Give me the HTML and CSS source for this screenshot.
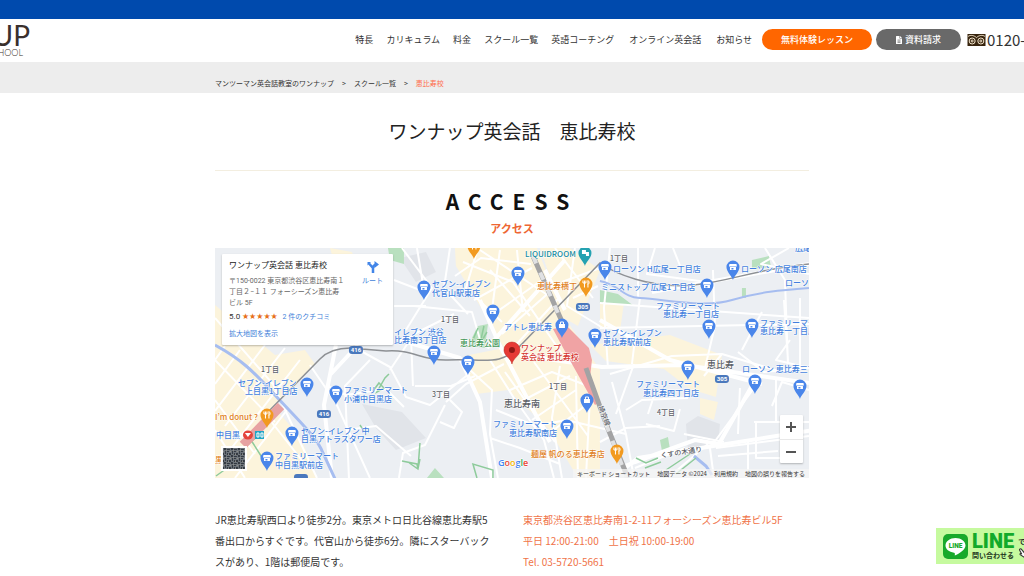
FILE: index.html
```html
<!DOCTYPE html>
<html lang="ja">
<head>
<meta charset="utf-8">
<meta name="viewport" content="width=device-width, initial-scale=1">
<title>ワンナップ英会話 恵比寿校</title>
<link rel="stylesheet" href="styles.css">
</head>
<body>
<div class="topbar"></div>
<header class="header">
  <a class="logo" href="#" aria-label="ワンナップ英会話">
    <span class="logo-main">UP</span>
    <span class="logo-sub">HOOL</span>
  </a>
  <nav class="nav">
    <a href="#">特長</a>
    <a href="#">カリキュラム</a>
    <a href="#">料金</a>
    <a href="#">スクール一覧</a>
    <a href="#">英語コーチング</a>
    <a class="nav-wide" href="#">オンライン英会話</a>
    <a class="nav-wide" href="#">お知らせ</a>
  </nav>
  <div class="actions">
    <a class="pill pill-trial" href="#">無料体験レッスン</a>
    <a class="pill pill-docs" href="#">
      <svg class="doc-icon" viewBox="0 0 12 16" aria-hidden="true"><path fill="#fff" d="M1 0h6v5h5v10a1 1 0 0 1-1 1H1a1 1 0 0 1-1-1V1a1 1 0 0 1 1-1zM8 0l4 4H8z"/><path stroke="#696969" stroke-width="1.3" d="M3 8h6M3 10.500h6M3 13h6"/></svg>
      資料請求
    </a>
  </div>
  <a class="phone" href="tel:0120">
    <svg class="freedial" viewBox="0 0 54 36" aria-hidden="true"><rect width="54" height="36" fill="#38250f"/><g fill="none" stroke="#f6e8cf" stroke-width="3"><path d="M2 7c8-5 18-3 25 4 7-7 17-9 25-4"/><circle cx="14" cy="21" r="9"/><circle cx="40" cy="21" r="9"/><circle cx="14" cy="21" r="3"/><circle cx="40" cy="21" r="3"/></g></svg>
    <span>0120-</span>
  </a>
</header>

<div class="crumb-bar">
  <nav class="container crumbs" aria-label="パンくず">
    <a href="#">マンツーマン英会話教室のワンナップ</a><span>&gt;</span><a href="#">スクール一覧</a><span>&gt;</span><a class="current" href="#">恵比寿校</a>
  </nav>
</div>

<main class="container">
  <h1 class="title">ワンナップ英会話　恵比寿校</h1>
  <section class="access">
    <h2 class="access-en">ACCESS</h2>
    <p class="access-ja">アクセス</p>

    <div class="map">
      <svg class="map-canvas" viewBox="215 248 594 230" preserveAspectRatio="xMidYMid slice" role="img" aria-label="恵比寿校周辺の地図">
        <defs>
          <g id="pin"><path d="M0 13C-1 9-6.500 5-6.500 0a6.500 6.500 0 0 1 13 0C6.500 5 1 9 0 13z"/></g>
          <g id="shop"><use href="#pin" fill="#4a86ea"/><path fill="#fff" d="M-3.500-3h7l.5 2.500h-8zM-3 0h6v3h-6z"/><path fill="#4a86ea" d="M-1.500 1h2v1.500h-2z"/></g>
          <g id="food"><use href="#pin" fill="#f29a1f"/><path fill="none" stroke="#fff" stroke-width="1" d="M-1.500-3.500v7M-3-3.500v2.500h3v-2.500M2 3.500v-7c1.500 1 1.500 3 0 4"/></g>
          <g id="bag"><use href="#pin" fill="#4a86ea"/><path fill="#fff" d="M-3-1h6v4h-6z"/><path fill="none" stroke="#fff" d="M-1.500-1v-2h3v2"/></g>
          <g id="shield"><rect x="-7" y="-4" width="14" height="8" rx="3" fill="#4a78bd"/></g>
          <pattern id="qr" width="7" height="7" patternUnits="userSpaceOnUse"><rect width="7" height="7" fill="#6d747b"/><path fill="#343a41" d="M0 0h2v2h-2zM3 1h3v1h-3zM1 3h1v3h-1zM3 3h2v1h-2zM5 5h2v2h-2zM3 5h1v2h-1z"/><path fill="#8f8e86" d="M2 2h1v1h-1zM6 3h1v1h-1zM4 6h1v1h-1z"/></pattern>
        </defs>
        <rect x="215" y="248" width="594" height="230" fill="#eceff3"/>
        <g fill="#fcf4dc">
          <path d="M455 248h82l28 70 35 52v108h-22l-30-50-40-38-32 4-12-38 40-8-18-32-30-50z"/>
          <path d="M215 305l60 50 30-5 10 14-42 42 28 32 16 40H215z"/>
          <path d="M540 248h30l30 22-22 56-14-8zM600 297l24 6-4 28-20-4zM590 345l80-10 52 20-6 42-26-8-26-20-58-8zM700 398l18 4-4 18-14-6z"/>
          <path d="M330 248l22 4 10 26-20 10z"/>
        </g>
        <path fill="#e1e4e9" d="M362 404l40 8 24 26-30 12-20-22zM686 424l12-8 22 8-2 22-30 4zM400 258l26-6 10 20-20 10z"/>
        <g fill="#b9e0bf">
          <path d="M388 248h16v16l-14-4zM472 338l6-12 10-2-3 24-14-2zM600 290l18 4 16 12-34-3zM752 260l17-4 2 11-19 2zM742 288h4v10h-4zM427 478l8-10 9 10zM660 440l8-3 2 12-8 2z"/>
        </g>
        <g fill="none" stroke="#fff" stroke-linejoin="round" stroke-width="2">
          <path d="M215 318l58 66 44 94M215 360l60 62M215 400l40 54M225 346l-10 14M240 350l-25 34M265 345l-50 66M285 348l-60 78M300 360l-70 90M270 420l38 48M287 410l-52 68M310 365l26 38 34 75M215 430l30 48"/>
          <path d="M350 345l40 22 16 30 24 8 40-32M370 360l-25 26 4 92M326 385l20 10 40-6 18 18M346 430l30-4 35 30M390 370l24-36 40-20M402 248l30 40-26 42M414 306l58 6 10 34M425 296l-8-48M450 248l-6 40 24 26M394 306h32M394 280l26 10M415 386h36l24-10M413 386l-2-50M445 405l-20 40-22 8-4 25M446 402l20-18 38-20M450 400l12 12-8 16-14-6"/>
          <path d="M470 370l22 20-2 44 8 44M490 360l24 38 30 42 10 38M490 438l30 10 40 16M496 410l40 16 30-6 60 14M510 390l42-18 36 14M520 402l50-26M532 420l44-30M546 436l44-34M560 366l-8 52 10 60M576 376l2 102M590 398l-4 80M505 372l50 70M534 362l54 74"/>
          <path d="M463 262l50 20 30 44M478 248l-12 40 36 34M455 276l26-18 50 6M474 300l58-32M488 318l54-38M502 334l50-44M515 346l44-48M490 270l40 46M500 250l-8 60M517 250l6 62M532 310l30 44M480 250l66 44M555 248l38 50M575 248l-8 58 36 22M600 268l-38 14M598 286l-25 12"/>
          <path d="M610 248l-6 60 4 60M638 248v50M655 248l-8 26 60 8M673 248l10 25M713 270l2 56-10 42M765 248l20 32 3 84M789 248l-28 16 48 10M600 303l209 15M600 328l209-4M640 298l-8 66M610 374l62-18 50-2 60 18M742 350l20-38M722 354l-18 22M760 380l-50 68 4 30M740 388l-2 46M776 380v42h33M754 422h36M756 422v36h34M716 448l93-12M718 456l60-5M748 440v30M772 406l10-24 27 8M790 340l-14 20 33 8M784 300l4 60M800 298v70"/>
          <path d="M612 382l14 52 8 44M626 410l16-10 46-2M648 414l6-18M646 424l28 7 6-22M634 364l-18 50M600 442l26-14 34-2M635 468l50-20M684 434l40 8M668 478l40-34M738 352l26 20 45-4"/>
        </g>
        <g fill="none" stroke="#fff" stroke-width="4" stroke-linejoin="round">
          <path d="M336 345l-12 60 8 73M358 345l-28 30M400 340l60 18 20 44 12 76M480 300l20 46 50 96M520 355l82 12 82-2 125 18M600 320l70 40 92 24M625 466l10-4 60-22 24 4 34-60M612 478l26-20 176-28M652 292l157-28M565 260l-78 88M545 270l20 40"/>
        </g>
        <g fill="none" stroke="#a6bdf0" stroke-width="2">
          <path d="M600 281c20 4 22 16 40 17 30 2 66 10 92 2s50-10 77-12"/>
          <path stroke-width="3" d="M215 345c26 14 38 26 60 50s42 42 48 58l14 30M694 456l12 10 6 9"/>
        </g>
        <g fill="none" stroke="#8ecb9b" stroke-width="1.500">
          <path d="M373 391l6-8 5 5-7 4 8-14 4-4M402 461l15 3 1 5 2-26M408 462l10 7 2-10M477 478l-4-14 20 6v9M478 328l-6 14M484 326l-4 18 7-12M636 458l10 5 12-5M645 468l16-6M666 470l24-16M676 474l20-16M251 440l14 22M258 436l-12 10M216 476l14-10M360 425l4 6"/>
        </g>
        <g fill="none">
          <path stroke="#8d9094" stroke-width="1.500" d="M270 410l50-51q14-14 42-10l24 2c28-2 34 10 62 9 36-2 52 8 74-16l78-81c14 10 50 26 94 22 38-4 62-16 115-21"/>
          <path stroke="#e7a2a2" stroke-width="9" d="M243 445l38-39"/>
          <path fill="#f0a3a4" d="M553 329l14-3 22 22 3 12-2 18 10 24-5 3-28-50z"/>
          <path stroke="#a3a3a4" stroke-width="5" d="M533 256l31 70M586 368l21 58 21 52"/>
          <path stroke="#e0e1e3" stroke-width="4" stroke-dasharray="8 10" d="M533 256l28 64M606 424l21 54"/>
        </g>

        <g class="label shop-label">
          <text x="432" y="287">セブン-イレブン</text><text x="432" y="296">代官山駅東店</text>
          <text x="394" y="335">イレブン 渋谷</text><text x="394" y="343">比寿南3丁目店</text>
          <text x="504" y="330">アトレ恵比寿</text>
          <text x="613" y="272">ローソン H広尾一丁目店</text>
          <text x="601" y="290">ミニストップ 広尾1丁目店</text>
          <text x="741" y="272">ローソン 広尾南店</text><text x="785" y="286">ローソン</text>
          <text x="795" y="251">広尾南</text>
          <text x="656" y="309">ファミリーマート</text><text x="663" y="317">恵比寿一丁目店</text>
          <text x="760" y="326">ファミリーマート</text><text x="760" y="334">恵比寿一丁目店</text>
          <text x="603" y="336">セブン-イレブン</text><text x="603" y="345">恵比寿駅前店</text>
          <text x="742" y="372">ローソン 恵比寿三丁目</text>
          <text x="636" y="387">ファミリーマート</text><text x="643" y="396">恵比寿四丁目店</text>
          <text x="238" y="386">セブン-イレブン</text><text x="245" y="394">上目黒1丁目店</text>
          <text x="344" y="393">ファミリーマート</text><text x="344" y="402">小浦中目黒店</text>
          <text x="301" y="434">セブン-イレブン 中</text><text x="301" y="442">目黒アトラスタワー店</text>
          <text x="275" y="459">ファミリーマート</text><text x="275" y="468">中目黒駅前店</text>
          <text x="493" y="427">ファミリーマート</text><text x="509" y="436">恵比寿駅南店</text>
          <text x="216" y="438">中目黒</text>
        </g>
        <g class="label food-label">
          <text x="537" y="289">恵比寿横丁</text><text x="215" y="420">I’m donut ?</text><text x="531" y="457">麺屋 帆のる恵比寿店</text><text x="215" y="463">黒</text>
        </g>
        <text class="label park-label" x="460" y="346">恵比寿公園</text>
        <text class="label venue-label" x="525" y="257">LIQUIDROOM</text>
        <g class="label area-label">
          <text x="441" y="322">1丁目</text><text x="610" y="261">1丁目</text><text x="261" y="372">1丁目</text><text x="432" y="397">3丁目</text><text x="549" y="389">1丁目</text><text x="657" y="415">4丁目</text>
          <text class="district" x="504" y="407">恵比寿南</text><text class="district" x="707" y="368">恵比寿</text>
          <text x="661" y="458" transform="rotate(-9 661 458)">くすの木通り</text>
          <text x="598" y="407" transform="rotate(68 598 407)">埼京線</text>
        </g>

        <use href="#shop" x="518" y="273"/><use href="#shop" x="424" y="287"/><use href="#shop" x="493" y="311"/>
        <use href="#bag" x="562" y="325"/><use href="#shop" x="595" y="335"/><use href="#shop" x="605" y="267"/>
        <use href="#shop" x="707" y="285"/><use href="#shop" x="733" y="267"/><use href="#shop" x="709" y="326"/>
        <use href="#shop" x="752" y="325"/><use href="#shop" x="688" y="367"/><use href="#shop" x="755" y="381"/>
        <use href="#shop" x="800" y="386"/><use href="#shop" x="434" y="352"/><use href="#shop" x="468" y="362"/>
        <use href="#shop" x="307" y="384"/><use href="#shop" x="336" y="392"/><use href="#shop" x="292" y="433"/>
        <use href="#shop" x="267" y="458"/><use href="#bag" x="587" y="400"/><use href="#shop" x="567" y="426"/>
        <use href="#food" x="474" y="246"/><use href="#food" x="586" y="284"/><use href="#food" x="267" y="415"/><use href="#food" x="617" y="451"/>
        <use href="#pin" x="585" y="253" fill="#25a2b1"/><path fill="#fff" d="M582 250h4v4h-4zM586 252h3v4h-3z"/>
        <ellipse cx="248" cy="435" rx="5" ry="4.500" fill="#e5443b"/><path fill="#fff" d="M245 433h6l-3 4z"/>
        <rect x="255" y="431" width="9" height="8" fill="#20a5c5"/><path fill="none" stroke="#fff" d="M257 433h2v4h-2zM261 433h2v4h-2z"/>
        <path fill="#e63a35" stroke="#b92a26" stroke-width=".5" d="M512 364c-1-6-8-8-8-14a8 8 0 0 1 16 0c0 6-7 8-8 14z"/><circle cx="512" cy="350" r="3" fill="#8e1815"/>
        <g class="label brand-label"><text x="521" y="351">ワンナップ</text><text x="521" y="360">英会話 恵比寿校</text></g>
        <use href="#shield" x="583" y="307"/><use href="#shield" x="722" y="379"/><use href="#shield" x="356" y="350"/><use href="#shield" x="324" y="414"/><use href="#shield" x="301" y="478"/>
        <g class="shield-label"><text x="583" y="309">305</text><text x="722" y="381">305</text><text x="356" y="352">416</text><text x="324" y="416">416</text></g>
        <rect x="221" y="446" width="26" height="25" fill="#fff"/><rect x="223" y="448" width="22" height="21" fill="url(#qr)"/>
        <text class="label google" x="498" y="466"><tspan fill="#4285f4">G</tspan><tspan fill="#ea4335">o</tspan><tspan fill="#f4b400">o</tspan><tspan fill="#4285f4">g</tspan><tspan fill="#34a853">l</tspan><tspan fill="#ea4335">e</tspan></text>
      </svg>

      <div class="place-card">
        <div class="place-info">
          <h3 class="place-name">ワンナップ英会話 恵比寿校</h3>
          <p class="place-address">〒150-0022 東京都渋谷区恵比寿南１<br>丁目２−１１ フォーシーズン恵比寿<br>ビル 5F</p>
          <p class="rating"><span class="score">5.0</span> <span class="stars">★★★★★</span> <a href="#">2 件のクチコミ</a></p>
          <a class="larger" href="#">拡大地図を表示</a>
        </div>
        <a class="route" href="#">
          <svg class="route-icon" viewBox="0 0 24 24" aria-hidden="true"><path fill="none" stroke="#4285e8" stroke-width="5" d="M12 24V14L4 5M12 15q0-7 7-8"/><path fill="#4285e8" d="M15 0l9 7-9 7zM1 2h7L1 9z"/></svg>
          ルート
        </a>
      </div>
      <div class="zoom">
        <button class="zoom-button" type="button" aria-label="拡大"><svg viewBox="0 0 12 12" aria-hidden="true"><path d="M6 1v10M1 6h10"/></svg></button>
        <button class="zoom-button" type="button" aria-label="縮小"><svg viewBox="0 0 12 12" aria-hidden="true"><path d="M1 6h10"/></svg></button>
      </div>
      <div class="map-terms">
        <button class="terms-button" type="button">キーボード ショートカット</button>
        <span>地図データ ©2024</span>
        <a href="#">利用規約</a>
        <a href="#">地図の誤りを報告する</a>
      </div>
    </div>

    <div class="details">
      <p class="directions">JR恵比寿駅西口より徒歩2分。東京メトロ日比谷線恵比寿駅5番出口からすぐです。代官山から徒歩6分。隣にスターバックスがあり、1階は郵便局です。</p>
      <p class="contact">東京都渋谷区恵比寿南1-2-11フォーシーズン恵比寿ビル5F<br>平日 12:00-21:00　土日祝 10:00-19:00<br>Tel. 03-5720-5661</p>
    </div>
  </section>
</main>

<a class="line-banner" href="#">
  <svg class="line-icon" viewBox="0 0 50 50" aria-hidden="true"><rect width="50" height="50" rx="10" fill="#18a92b"/><path fill="#fff" d="M25 8C14 8 5 14.500 5 23c0 7 7 13 17 14.500 2 .5 2 2 1.500 5.500C33 39 45 31 45 23 45 14.500 36 8 25 8z"/><text x="25" y="28" text-anchor="middle" font-family="Roboto, sans-serif" font-size="13" font-weight="900" fill="#18a92b">LINE</text></svg>
  <span class="line-copy"><strong>LINE</strong><small>問い合わせる</small></span>
  <span class="line-side">で
    <svg class="hand" viewBox="0 0 20 20" aria-hidden="true"><path fill="#fff" stroke="#333" stroke-width="2" d="M6 4l5 6c3-2 8 0 8 4s-3 6-7 5l-8-5c-1-2 1-3 3-1L3 6c-1-2 2-4 3-2z"/></svg>
  </span>
</a>
</body>
</html>
```

FILE: styles.css
```css
* { box-sizing: border-box; }
body {
  margin: 0;
  background: #fff;
  color: #333;
  font-family: "Noto Sans CJK JP", sans-serif;
  font-size: 10px;
  overflow-x: hidden;
}
a { color: inherit; text-decoration: none; }
h1, h2, h3, p { margin: 0; }
button { border: 0; padding: 0; font: inherit; color: inherit; cursor: pointer; }

.topbar { height: 19px; background: #004aad; }
.header {
  display: flex;
  align-items: center;
  height: 43px;
  padding-bottom: 2px;
  overflow: hidden;
  white-space: nowrap;
}
.logo {
  display: flex;
  flex-direction: column;
  align-items: flex-end;
  width: 30px;
  color: #3a302d;
}
.logo-main { font: 28px/26px "Liberation Sans Narrow", Lato, sans-serif; }
.logo-sub { font: 300 9px/10px Lato, sans-serif; padding-right: 7px; }
.nav {
  display: flex;
  gap: 13px;
  margin-left: auto;
  font-size: 9px;
  line-height: 14px;
}
.nav-wide { padding-left: 2px; }
.actions { display: flex; gap: 4px; margin-left: 10px; }
.pill {
  display: flex;
  align-items: center;
  justify-content: center;
  gap: 3px;
  height: 21px;
  border-radius: 11px;
  color: #fff;
  font-size: 9px;
  font-weight: 500;
}
.pill-trial { width: 110px; background: #ff6600; }
.pill-docs { width: 85px; background: #696969; }
.doc-icon { width: 6px; height: 8px; }
.phone {
  display: flex;
  align-items: center;
  width: 57px;
  margin-left: 6px;
  font-size: 15px;
}
.freedial { flex: none; width: 19px; height: 12px; margin-right: 1px; }

.container { width: 58%; margin: 0 auto; }
.crumb-bar { background: #ededed; padding: 16px 0 4px; }
.crumbs { display: flex; gap: 8px; font-size: 7px; line-height: 11px; }
.current { color: #ff6b4a; }

.title {
  padding: 22px 0 24px;
  border-bottom: 1px solid #f3eee0;
  color: #222;
  font-size: 19px;
  font-weight: 400;
  line-height: 31px;
  text-align: center;
}
.access { padding-top: 15px; text-align: center; }
.access-en {
  color: #111;
  font-size: 21px;
  font-weight: 700;
  letter-spacing: 9px;
  line-height: 30px;
}
.access-ja {
  padding: 4px 0 12px;
  color: #ee6633;
  font-size: 11px;
  font-weight: 700;
  line-height: 16px;
}

.map { position: relative; height: 230px; overflow: hidden; text-align: left; }
.map-canvas { display: block; width: 100%; height: 100%; }
.label {
  font-size: 8px;
  font-weight: 500;
  paint-order: stroke;
  stroke: #fff;
  stroke-width: 1px;
  stroke-linejoin: round;
}
.shop-label { fill: #437fdd; }
.food-label { fill: #df8021; }
.park-label { fill: #429657; }
.venue-label { fill: #188c9e; }
.area-label { fill: #5b6066; font-size: 7px; }
.district { font-size: 9px; }
.brand-label { fill: #d5352e; }
.google { font-family: "Open Sans", sans-serif; font-size: 9px; font-weight: 600; }
.shield-label { fill: #fff; font: 700 6px Roboto, sans-serif; text-anchor: middle; }

.place-card {
  position: absolute;
  top: 6px;
  left: 7px;
  display: flex;
  justify-content: space-between;
  width: 171px;
  padding: 6px 10px 5px 7px;
  background: #fff;
  border-radius: 1px;
  box-shadow: 0 1px 2px rgba(0, 0, 0, .25);
  font-family: Roboto, "Noto Sans CJK JP", sans-serif;
  font-size: 7px;
  line-height: 11px;
  white-space: nowrap;
}
.place-info { width: 120px; }
.place-name { color: #222; font-size: 8px; font-weight: 400; line-height: 12px; padding-bottom: 4px; }
.place-address { color: #666; }
.rating { padding: 2px 0 6px; }
.score { font-size: 8px; }
.stars { color: #e7711b; font-family: "DejaVu Sans", sans-serif; font-size: 8px; padding-right: 3px; }
.rating a, .larger, .route { color: #427fd9; }
.larger { display: block; }
.route { display: flex; flex-direction: column; align-items: center; gap: 3px; padding-top: 1px; }
.route-icon { width: 12px; height: 12px; }

.zoom {
  position: absolute;
  right: 6px;
  bottom: 15px;
  width: 23px;
  background: #fff;
  border-radius: 1px;
  box-shadow: 0 1px 2px rgba(0, 0, 0, .25);
}
.zoom-button { display: grid; place-items: center; width: 100%; height: 24px; background: none; }
.zoom-button + .zoom-button { border-top: 1px solid #e8e8e8; }
.zoom-button svg { width: 12px; height: 12px; stroke: #555; stroke-width: 2; }
.map-terms {
  position: absolute;
  right: 0;
  bottom: 0;
  display: flex;
  gap: 7px;
  padding: 0 4px;
  background: rgba(245, 245, 245, .75);
  color: #333;
  font-size: 6px;
  line-height: 9px;
}
.terms-button { background: none; }

.details {
  display: grid;
  grid-template-columns: 280px 1fr;
  column-gap: 28px;
  padding: 31px 0 5px;
  line-height: 21px;
  text-align: left;
}
.contact { color: #f07348; }

.line-banner {
  position: fixed;
  right: 0;
  bottom: 12px;
  display: flex;
  align-items: center;
  gap: 4px;
  width: 88px;
  height: 36px;
  padding-left: 7px;
  overflow: hidden;
  background: #c6fa9f;
  white-space: nowrap;
}
.line-icon { flex: none; width: 25px; height: 25px; }
.line-copy { display: flex; flex-direction: column; }
.line-copy strong { color: #12aa2a; font: 900 20px/17px Roboto, sans-serif; }
.line-copy small { color: #23371d; font-size: 7px; font-weight: 700; line-height: 10px; }
.line-side { display: flex; flex-direction: column; color: #222; font-size: 7px; font-weight: 700; line-height: 12px; }
.hand { width: 11px; height: 11px; }
```
